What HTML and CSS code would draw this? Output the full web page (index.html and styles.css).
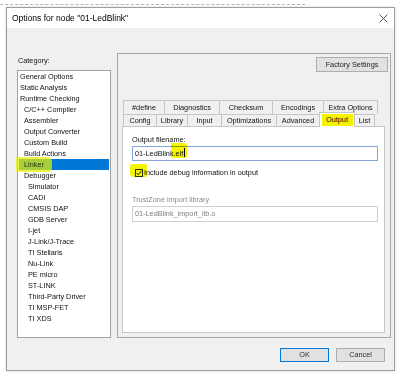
FILE: index.html
```html
<!DOCTYPE html>
<html>
<head>
<meta charset="utf-8">
<link rel="stylesheet" href="styles.css">
</head>
<body>
<div class="topcode"></div>
<div class="dialog">
  <div class="titlebar">
    <span class="title">Options for node "01-LedBlink"</span>
    <svg class="close" width="9" height="9" viewBox="0 0 9 9"><path d="M0.5 0.5 L8.5 8.5 M8.5 0.5 L0.5 8.5" stroke="#444" stroke-width="0.9" fill="none"/></svg>
  </div>
  <div class="content">
    <div class="main">
      <div class="catcol">
        <div class="catlabel">Category:</div>
        <div class="catlist">
          <div class="item l0">General Options</div>
          <div class="item l0">Static Analysis</div>
          <div class="item l0">Runtime Checking</div>
          <div class="item l1">C/C++ Compiler</div>
          <div class="item l1">Assembler</div>
          <div class="item l1">Output Converter</div>
          <div class="item l1">Custom Build</div>
          <div class="item l1">Build Actions</div>
          <div class="item l1 sel"><span class="hl-linker"></span><span class="seltxt">Linker</span></div>
          <div class="item l1">Debugger</div>
          <div class="item l2">Simulator</div>
          <div class="item l2">CADI</div>
          <div class="item l2">CMSIS DAP</div>
          <div class="item l2">GDB Server</div>
          <div class="item l2">I-jet</div>
          <div class="item l2">J-Link/J-Trace</div>
          <div class="item l2">TI Stellaris</div>
          <div class="item l2">Nu-Link</div>
          <div class="item l2">PE micro</div>
          <div class="item l2">ST-LINK</div>
          <div class="item l2">Third-Party Driver</div>
          <div class="item l2">TI MSP-FET</div>
          <div class="item l2">TI XDS</div>
        </div>
      </div>
      <div class="group">
        <div class="factory-row"><div class="btn factory">Factory Settings</div></div>
        <div class="tabs">
          <div class="tabrow back">
            <div class="tab first w42">#define</div>
            <div class="tab w55">Diagnostics</div>
            <div class="tab w53">Checksum</div>
            <div class="tab w51">Encodings</div>
            <div class="tab w54">Extra Options</div>
          </div>
          <div class="tabrow front">
            <div class="tab first w34">Config</div>
            <div class="tab w31">Library</div>
            <div class="tab w34">Input</div>
            <div class="tab w55">Optimizations</div>
            <div class="tab w43">Advanced</div>
            <div class="tab sel w35"><span class="tab-hl">Output</span></div>
            <div class="tab w20">List</div>
          </div>
          <div class="page">
            <div class="lbl">Output filename:</div>
            <div class="field focus">01-LedBlink.elf<span class="caret"></span><span class="hl-elf"></span></div>
            <div class="checkrow">
              <span class="hl-check"></span>
              <svg class="checkbox" width="8" height="8" viewBox="0 0 8 8"><rect x="0.5" y="0.5" width="7" height="7" fill="none" stroke="#333" stroke-width="1"/><path d="M1.6 4 L3.2 5.7 L6.4 1.9" stroke="#222" stroke-width="1" fill="none"/></svg>
              <span class="checklbl">Include debug information in output</span>
            </div>
            <div class="lbl disabled trust">TrustZone import library</div>
            <div class="field dis">01-LedBlink_import_lib.o</div>
          </div>
        </div>
      </div>
    </div>
    <div class="buttons">
      <div class="btn dlg ok">OK</div>
      <div class="btn dlg">Cancel</div>
    </div>
  </div>
</div>
</body>
</html>
```

FILE: styles.css
```css
html, body {
  margin: 0;
  padding: 0;
  background: #ffffff;
}
body {
  font-family: "Liberation Sans", Arial, sans-serif;
  font-size: 7.3px;
  color: #111;
  width: 399px;
  height: 376px;
  overflow: hidden;
}
.topcode {
  width: 305px;
  height: 4px;
  border-bottom: 1px dashed #b8b8b8;
  margin-bottom: 2px;
}
.dialog {
  margin-left: 6px;
  width: 389px;
  box-sizing: border-box;
  border: 1px solid #9c9c9c;
  background: #f0f0f0;
  box-shadow: 0 0 3px rgba(0,0,0,0.15);
}
.titlebar {
  height: 20px;
  background: #ffffff;
  display: flex;
  align-items: center;
  justify-content: space-between;
  padding: 0 6px 0 5px;
}
.title {
  font-size: 8.5px;
  color: #000;
}
.close {
  display: block;
}
.content {
  padding: 25px 3px 8px 10px;
}
.main {
  display: flex;
  gap: 6px;
}
.catcol {
  width: 94px;
  display: flex;
  flex-direction: column;
}
.catlabel {
  margin-top: 2px;
  height: 11px;
  line-height: 11px;
  padding-left: 1px;
  margin-bottom: 4px;
}
.catlist {
  height: 268px;
  box-sizing: border-box;
  border: 1px solid #a3a3a3;
  background: #ffffff;
  padding-top: 0;
}
.item {
  height: 11px;
  line-height: 11px;
  margin: 0 1px;
  white-space: nowrap;
}
.l0 { padding-left: 1px; }
.l1 { padding-left: 5px; }
.l2 { padding-left: 9px; }
.item.sel {
  background: #0078d7;
  position: relative;
}
.hl-linker {
  position: absolute;
  left: -3px;
  top: -2px;
  width: 36px;
  height: 15px;
  background: rgba(232, 240, 0, 0.72);
  border-radius: 2px 5px 4px 2px;
}
.seltxt {
  position: relative;
  color: #25330a;
}
.group {
  width: 274px;
  height: 285px;
  box-sizing: border-box;
  border: 1px solid #a6a6a6;
  padding: 3px 0 4px 4px;
  display: flex;
  flex-direction: column;
}
.factory-row {
  display: flex;
  justify-content: flex-end;
  padding-right: 2px;
}
.btn {
  box-sizing: border-box;
  background: #e1e1e1;
  border: 1px solid #adadad;
  text-align: center;
  color: #222;
}
.factory {
  width: 72px;
  height: 15px;
  line-height: 13px;
}
.tabs {
  margin-top: 28px;
  margin-right: 5px;
  flex: 1;
  display: flex;
  flex-direction: column;
}
.tabrow {
  display: flex;
  padding-left: 1px;
  height: 14px;
}
.tabrow.front {
  margin-top: -2px;
  align-items: flex-end;
}
.tab {
  box-sizing: border-box;
  background: #f0f0f0;
  border-top: 1px solid #c6c6c6;
  border-right: 1px solid #c6c6c6;
  text-align: center;
  white-space: nowrap;
}
.tab.first {
  border-left: 1px solid #c6c6c6;
}
.back .tab {
  height: 14px;
  line-height: 13px;
}
.front .tab {
  height: 12px;
  line-height: 11px;
}
.front .tab.sel {
  height: 15px;
  margin-bottom: -1px;
  background: #ffffff;
  z-index: 1;
  border-left: 1px solid #c6c6c6;
  margin-left: -1px;
  width: 36px;
  padding-top: 1px;
}
.tab-hl {
  display: inline-block;
  background: #f4f400;
  width: 31px;
  height: 12px;
  line-height: 12px;
}
.w20 { width: 20px; }
.w31 { width: 31px; }
.w34 { width: 34px; }
.w35 { width: 35px; }
.w42 { width: 42px; }
.w43 { width: 43px; }
.w51 { width: 51px; }
.w53 { width: 53px; }
.w54 { width: 54px; }
.w55 { width: 55px; }
.page {
  flex: 1;
  background: #ffffff;
  border: 1px solid #c6c6c6;
  padding-left: 9px;
}
.lbl {
  margin-top: 8px;
  height: 10px;
  line-height: 10px;
}
.lbl.disabled {
  color: #8a8a8a;
}
.lbl.trust {
  margin-top: 17px;
}
.field {
  margin-top: 1px;
  width: 246px;
  height: 15px;
  box-sizing: border-box;
  border: 1px solid #cfcfcf;
  padding-left: 2px;
  line-height: 13px;
  white-space: nowrap;
  position: relative;
}
.field.focus {
  border-color: #86a7d8;
  color: #111;
}
.field.dis {
  height: 16px;
  line-height: 14px;
  color: #7e7e7e;
}
.caret {
  display: inline-block;
  width: 0;
  height: 9px;
  border-left: 1px solid #000;
  margin-left: 1px;
  vertical-align: -1px;
}
.hl-elf {
  position: absolute;
  left: 38px;
  top: -4px;
  width: 16px;
  height: 15px;
  background: #f5f500;
  mix-blend-mode: multiply;
  border-radius: 1px 3px 2px 2px;
}
.checkrow {
  margin-top: 7px;
  height: 10px;
  display: flex;
  align-items: center;
  position: relative;
}
.hl-check {
  position: absolute;
  left: -2px;
  top: -4px;
  width: 17px;
  height: 13px;
  background: #f5f500;
  mix-blend-mode: multiply;
  border-radius: 3px 2px 2px 4px;
}
.checkbox {
  display: block;
  margin-left: 3px;
  mix-blend-mode: multiply;
}
.checklbl {
  margin-left: 1px;
  line-height: 10px;
}
.buttons {
  margin-top: 10px;
  display: flex;
  justify-content: flex-end;
  gap: 7px;
  padding-right: 6px;
}
.dlg {
  width: 49px;
  height: 14px;
  line-height: 12px;
  color: #333;
}
.dlg.ok {
  border-color: #0078d7;
}
```
